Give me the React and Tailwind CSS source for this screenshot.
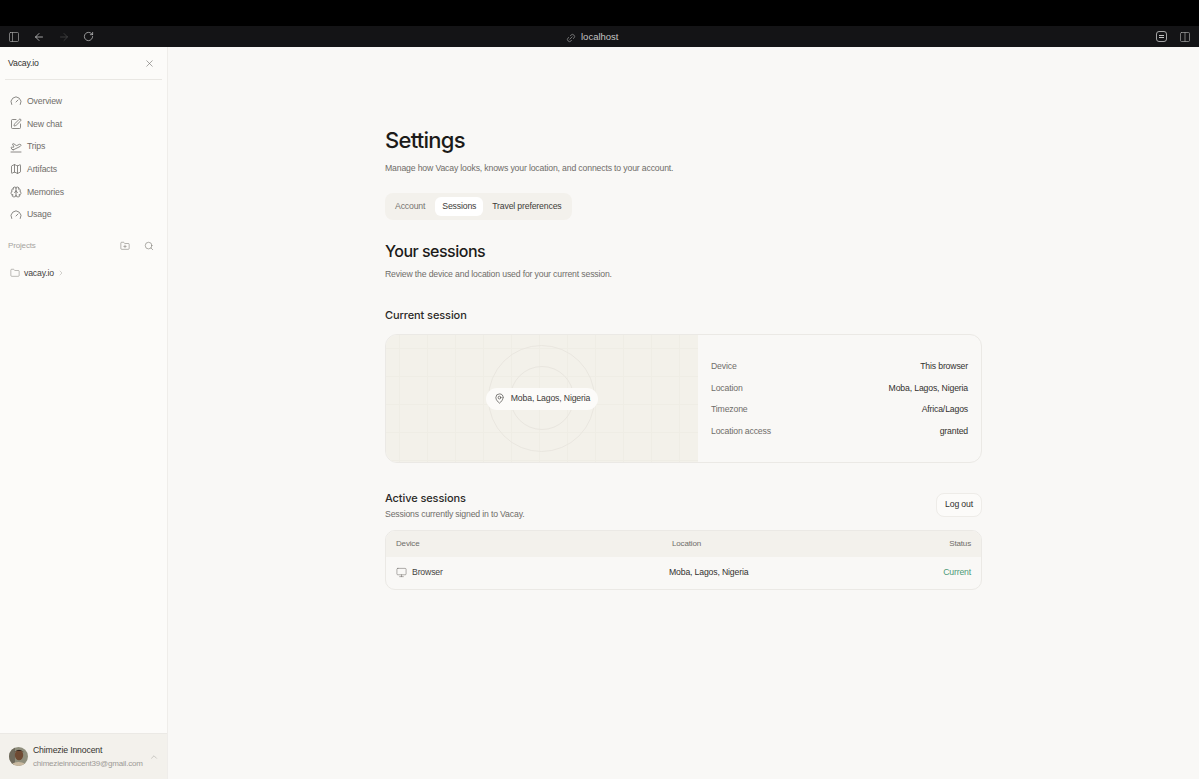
import React from "react";
import { PanelLeft, ArrowLeft, ArrowRight, RotateCw, Link2, Columns2, X, Gauge, SquarePen, PlaneTakeoff, Map, Brain, FolderPlus, Search, Folder, ChevronRight, ChevronUp, MapPin, Monitor } from "lucide-react";

const nav = [
  [Gauge, "Overview"],
  [SquarePen, "New chat"],
  [PlaneTakeoff, "Trips"],
  [Map, "Artifacts"],
  [Brain, "Memories"],
  [Gauge, "Usage"],
];
const info = [
  ["Device", "This browser"],
  ["Location", "Moba, Lagos, Nigeria"],
  ["Timezone", "Africa/Lagos"],
  ["Location access", "granted"],
];

function Avatar() {
  return (
    <svg width="19" height="19" viewBox="0 0 19 19" className="shrink-0 rounded-full">
      <rect width="19" height="19" fill="#8f8e7c" />
      <rect width="6" height="19" fill="#6f6a5c" />
      <ellipse cx="10" cy="8" rx="4.2" ry="5.2" fill="#6e4a33" />
      <path d="M5.5 6 C6 2 14 2 14.5 6 L14 4 L6 4 Z" fill="#2e241e" />
      <path d="M2 19 C3 13.5 16 13.5 17 19 Z" fill="#c9b9a0" />
    </svg>
  );
}

export default function App() {
  return (
    <div className="flex h-[779px] w-full flex-col overflow-hidden bg-[#f9f8f6] font-['Liberation_Sans',sans-serif] text-[8.7px] tracking-[-0.16px] text-[#2b2a28]">
      <div className="h-[26px] shrink-0 bg-black" />
      <div className="relative flex h-[21px] shrink-0 items-center justify-between bg-[#141416] px-[8px] text-[#a3a3a3]">
        <div className="flex items-center gap-[13px]">
          <PanelLeft size={12} strokeWidth={1.4} />
          <ArrowLeft size={12} strokeWidth={1.6} className="text-[#c4c4c4]" />
          <ArrowRight size={12} strokeWidth={1.4} className="text-[#4a4a4c]" />
          <RotateCw size={11} strokeWidth={1.6} className="text-[#c4c4c4]" />
        </div>
        <div className="absolute left-[566px] top-[1px] flex h-[21px] items-center gap-[5px] text-[#c4c4c4]">
          <Link2 size={10} strokeWidth={1.5} className="-rotate-45 text-[#a3a3a3]" />
          <span className="text-[9.5px] tracking-[0px]">localhost</span>
        </div>
        <div className="flex items-center gap-[12px]">
          <div className="flex h-[11px] w-[11px] flex-col items-center justify-center gap-[1.5px] rounded-[3px] border border-[#a3a3a3]">
            <div className="h-px w-[5px] bg-[#c4c4c4]" />
            <div className="h-px w-[5px] bg-[#c4c4c4]" />
          </div>
          <Columns2 size={12} strokeWidth={1.4} />
        </div>
      </div>

      <div className="flex min-h-0 flex-1">
        <aside className="flex w-[168px] shrink-0 flex-col border-r border-[#efedea] bg-[#fcfbf9]">
          <div className="mx-[5px] flex h-[33px] shrink-0 items-center justify-between border-b border-[#e9e7e3] pl-[3px] pr-[7px] pt-[1px]">
            <span className="text-[#33322f]">Vacay.io</span>
            <X size={11} strokeWidth={1.3} className="text-[#6e6c68]" />
          </div>
          <nav className="mt-[10px] flex flex-col pl-[10px]">
            {nav.map(([Icon, label]) => (
              <div key={label} className="flex h-[22.7px] items-center gap-[5px] text-[#6f6d69]">
                <Icon size={12} strokeWidth={1.6} className="text-[#6f6d69]" />
                <span>{label}</span>
              </div>
            ))}
          </nav>
          <div className="mt-[10px] flex h-[20px] items-center justify-between pl-[8px] pr-[13px] text-[8px] text-[#a5a3a0]">
            <span>Projects</span>
            <div className="flex items-center gap-[14px] text-[#77756f]">
              <FolderPlus size={10} strokeWidth={1.3} />
              <Search size={10} strokeWidth={1.4} />
            </div>
          </div>
          <div className="mt-[7px] flex h-[20px] items-center pl-[10px]">
            <Folder size={10} strokeWidth={1.2} className="text-[#7c7a75]" />
            <span className="ml-[4px] text-[#45433f]">vacay.io</span>
            <ChevronRight size={8} strokeWidth={1.3} className="ml-[3px] text-[#9a9894]" />
          </div>
          <div className="mt-auto flex h-[46px] items-center gap-[5px] border-t border-[#ebe9e5] bg-[#f3f1ec] pl-[9px] pr-[8px]">
            <Avatar />
            <div className="min-w-0 flex-1 leading-[13px]">
              <div className="text-[#33322f]">Chimezie Innocent</div>
              <div className="text-[8px] tracking-[-0.2px] text-[#9c9a96]">chimezieinnocent39@gmail.com</div>
            </div>
            <ChevronUp size={10} strokeWidth={1.3} className="text-[#a5a3a0]" />
          </div>
        </aside>

        <main className="min-w-0 flex-1">
          <div className="mx-auto w-[597px] pt-[78px]">
            <h1 className="font-['Inter',sans-serif] text-[22px] font-medium leading-[30px] tracking-[-0.75px] text-[#1c1b19]">Settings</h1>
            <p className="mt-[6px] leading-[14px] text-[#6f6d69]">Manage how Vacay looks, knows your location, and connects to your account.</p>

            <div className="mt-[18px] flex h-[27px] w-fit items-center gap-[2px] rounded-[8px] bg-[#f3f1ec] px-[3px]">
              <div className="pl-[7px] pr-[8px] text-[#777571]">Account</div>
              <div className="flex h-[19px] items-center rounded-[6px] bg-white px-[7px] text-[#3d3c39]">Sessions</div>
              <div className="px-[7px] text-[#3d3c39]">Travel preferences</div>
            </div>

            <h2 className="mt-[20px] font-['Inter',sans-serif] text-[16px] font-medium leading-[22px] tracking-[-0.5px] text-[#1c1b19]">Your sessions</h2>
            <p className="mt-[5px] leading-[14px] text-[#6f6d69]">Review the device and location used for your current session.</p>

            <h3 className="mt-[26px] font-['Inter',sans-serif] text-[11px] font-medium leading-[16px] tracking-[-0.1px] text-[#2b2a28]">Current session</h3>

            <div className="mt-[11px] flex h-[129px] overflow-hidden rounded-[12px] border border-[#ebe9e5]">
              <div className="relative flex w-[312px] shrink-0 items-center justify-center bg-[#f3f1ea] bg-[linear-gradient(to_right,#efede5_1px,transparent_1px),linear-gradient(to_bottom,#efede5_1px,transparent_1px)] bg-[size:28px_28px] bg-[position:13px_13px]">
                <div className="absolute left-[102px] top-[10px] h-[107px] w-[107px] rounded-full border border-[#e9e6df]" />
                <div className="absolute left-[124px] top-[31px] h-[64px] w-[64px] rounded-full border border-[#e9e6df]" />
                <div className="relative flex h-[22px] items-center gap-[6px] rounded-full bg-[#fcfbf9] pl-[8px] pr-[8px] text-[#3d3c39]">
                  <MapPin size={11} strokeWidth={1.4} />
                  <span>Moba, Lagos, Nigeria</span>
                </div>
              </div>
              <div className="flex flex-1 flex-col justify-center gap-[7.4px] pl-[13px] pr-[13px] pt-[1px]">
                {info.map(([k, v]) => (
                  <div key={k} className="flex h-[14px] items-center justify-between">
                    <span className="text-[#6f6d69]">{k}</span>
                    <span className="text-[#33322f]">{v}</span>
                  </div>
                ))}
              </div>
            </div>

            <div className="mt-[27px] flex items-center justify-between">
              <div>
                <h3 className="font-['Inter',sans-serif] text-[11px] font-medium leading-[16px] tracking-[-0.1px] text-[#2b2a28]">Active sessions</h3>
                <p className="mt-[1px] leading-[14px] text-[#6f6d69]">Sessions currently signed in to Vacay.</p>
              </div>
              <div className="flex h-[24px] w-[46px] -translate-y-[1px] items-center justify-center rounded-[8px] border border-[#eeece8] bg-[#fcfbf9] text-[#33322f]">Log out</div>
            </div>

            <div className="mt-[9px] overflow-hidden rounded-[10px] border border-[#ebe9e5]">
              <div className="grid h-[26px] grid-cols-[276px_1fr_auto] items-center bg-[#f3f1ec] px-[10px] text-[8px] text-[#6f6d69]">
                <span>Device</span>
                <span>Location</span>
                <span className="text-right">Status</span>
              </div>
              <div className="grid h-[32px] grid-cols-[273px_1fr_auto] items-center px-[10px]">
                <div className="flex items-center gap-[5px] text-[#45433f]">
                  <Monitor size={11} strokeWidth={1.2} className="text-[#6f6d69]" />
                  <span>Browser</span>
                </div>
                <span className="text-[#33322f]">Moba, Lagos, Nigeria</span>
                <span className="text-right text-[#4c9a78]">Current</span>
              </div>
            </div>
          </div>
        </main>
      </div>
    </div>
  );
}
